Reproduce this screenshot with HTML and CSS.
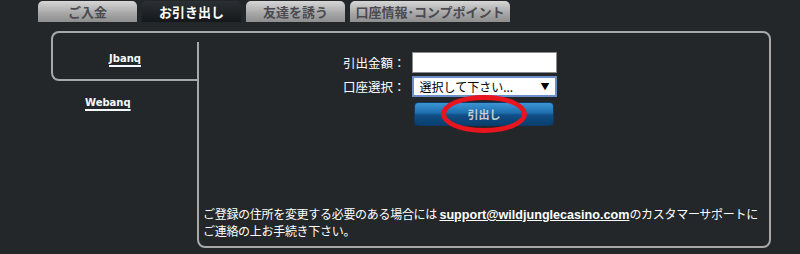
FILE: index.html
```html
<!DOCTYPE html>
<html lang="ja">
<head>
    <meta charset="UTF-8">
    <title>お引き出し</title>
    <link rel="stylesheet" href="styles.css">
</head>
<body>
    <div class="tabs">
        <div class="tab">ご入金</div>
        <div class="tab active">お引き出し</div>
        <div class="tab">友達を誘う</div>
        <div class="tab wide">口座情報･コンプポイント</div>
    </div>

    <div class="panel">
        <div class="side">
            <div class="side-active"><a href="#">Jbanq</a></div>
            <div class="side-item"><a href="#">Webanq</a></div>
        </div>

        <div class="main">
            <div class="form">
                <label for="amount">引出金額：</label>
                <input type="text" id="amount">

                <label for="account">口座選択：</label>
                <div class="select">
                    <span>選択して下さい...</span>
                    <span class="arrow">▼</span>
                </div>

                <div class="btn-wrap">
                    <button class="btn">引出し</button>
                    <span class="circle"></span>
                </div>
            </div>

            <p class="note">ご登録の住所を変更する必要のある場合には <a href="#">support@wildjunglecasino.com</a>のカスタマーサポートに<br>ご連絡の上お手続き下さい。</p>
        </div>
    </div>
</body>
</html>
```

FILE: styles.css
```css
:root {
    --bg: #23272a;
    --line: #a8a8a8;
}

* {
    margin: 0;
    padding: 0;
    box-sizing: border-box;
}

body {
    background-color: var(--bg);
    color: #fff;
    font-family: "Noto Sans CJK JP", sans-serif;
    font-size: 12px;
}

/* top tabs */
.tabs {
    display: flex;
    gap: 5px;
    padding: 1px 0 0 38px;
}

.tab {
    width: 99px;
    height: 21px;
    line-height: 21px;
    text-align: center;
    font-weight: bold;
    font-size: 13px;
    color: #4a4a50;
    background: linear-gradient(#d6d6d6, #a6a6a6 60%, #8e8e8e);
    border-radius: 5px 5px 0 0;
}

.tab.active {
    color: #fff;
    background: linear-gradient(#2b3034, #15181a);
}

.tab.wide {
    width: 160px;
}

/* panel */
.panel {
    display: flex;
    margin: 9px 0 0 51px;
    width: 720px;
    height: 217px;
}

.side {
    width: 146px;
    flex: none;
}

.side a {
    font-family: "DejaVu Sans", sans-serif;
    font-weight: bold;
    font-size: 10px;
    color: #f4f8ff;
    text-decoration: underline;
    text-decoration-thickness: 2px;
    text-underline-offset: 3px;
}

.side-active {
    height: 50px;
    border: 2px solid var(--line);
    border-right: none;
    border-radius: 8px 0 0 8px;
    text-align: center;
    padding: 17px 0 0 0;
    line-height: 14px;
}

.side-item {
    padding: 13px 0 0 34px;
    line-height: 14px;
}

.main {
    flex: 1;
    position: relative;
    display: flex;
    flex-direction: column;
    border: 2px solid var(--line);
    border-radius: 0 8px 8px 8px;
}

.main::before {
    content: "";
    position: absolute;
    left: -2px;
    top: 0;
    width: 2px;
    height: 9px;
    background-color: var(--bg);
}

.form {
    display: grid;
    grid-template-columns: 1fr 145px 1fr;
    row-gap: 3px;
    padding-top: 19px;
    align-items: center;
}

.form label {
    grid-column: 1;
    text-align: right;
    padding-right: 6px;
    font-size: 12.5px;
}

.form input {
    grid-column: 2;
    height: 21px;
    border: 1px solid #8a8a8a;
    background: #fff;
}

.select {
    grid-column: 2;
    height: 21px;
    display: flex;
    justify-content: space-between;
    align-items: center;
    padding: 0 5px 0 6px;
    border: 2px solid #6d8fc9;
    background: #fff;
    color: #000;
    font-size: 12px;
}

.select .arrow {
    font-size: 9px;
}

.btn-wrap {
    grid-column: 2;
    position: relative;
    display: flex;
    justify-content: center;
    margin-top: 2px;
}

.btn {
    width: 140px;
    height: 24px;
    border: 1px solid #0d3a66;
    border-radius: 4px;
    background: linear-gradient(#3d94d2, #1d6fae 45%, #0f4f86 55%, #0b3f6f);
    color: #c8cdd4;
    font-family: "Noto Sans CJK JP", sans-serif;
    font-weight: bold;
    font-size: 11px;
}

.circle {
    position: absolute;
    left: 29px;
    top: -7px;
    width: 86px;
    height: 38px;
    border: 5px solid #e8141e;
    border-radius: 50%;
}

.note {
    margin-top: auto;
    padding: 0 0 7px 4px;
    line-height: 16px;
    font-size: 12px;
    letter-spacing: -0.3px;
}

.note a {
    font-family: "Liberation Sans", sans-serif;
    font-weight: bold;
    font-size: 12.6px;
    letter-spacing: 0;
    color: #fff;
}
```
